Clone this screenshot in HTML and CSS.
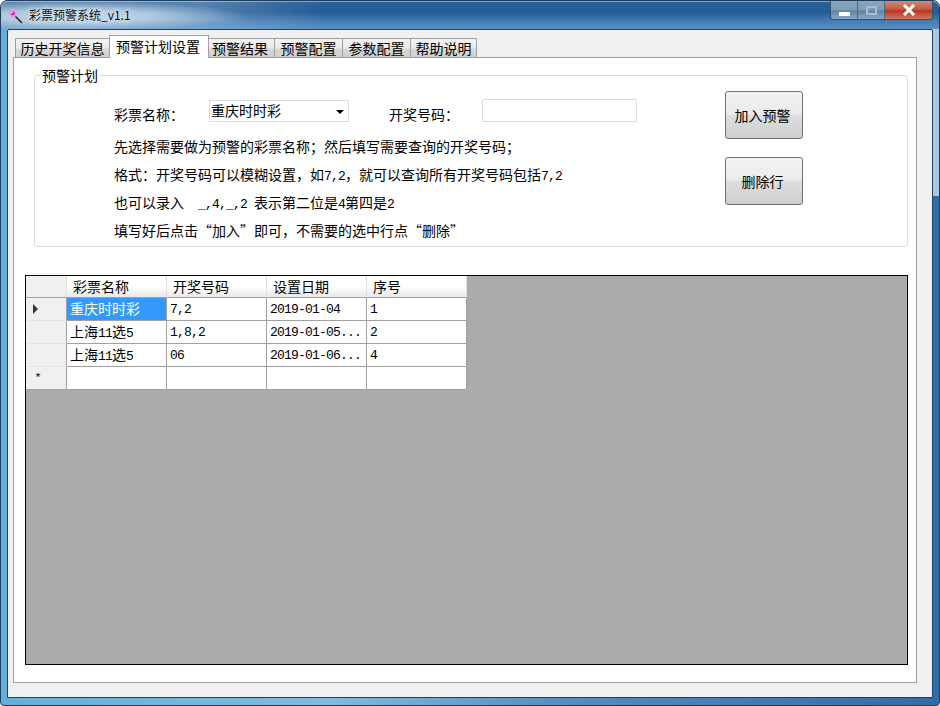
FILE: index.html
```html
<!DOCTYPE html>
<html lang="zh-CN">
<head>
  <meta charset="UTF-8">
  <title>彩票预警系统_v1.1</title>
  <link rel="stylesheet" href="styles.css">
</head>
<body>
  <div class="window">
    <div class="titlebar">
      <svg class="app-icon" width="16" height="16" viewBox="0 0 16 16">
        <path d="M7 7 L14 14" stroke="#222" stroke-width="1.6"/>
        <circle cx="5" cy="4.6" r="3.8" fill="#eb9be8"/>
        <circle cx="5" cy="4.6" r="2" fill="#c828c0"/>
        <circle cx="4.2" cy="3.8" r="0.8" fill="#fbe6fb"/>
      </svg>
      <span class="title">彩票预警系统_v1.1</span>
      <div class="controls">
        <div class="ctl ctl-min"><span class="min-glyph"></span></div>
        <div class="ctl ctl-max"><span class="max-glyph"></span></div>
        <div class="ctl ctl-close">
          <svg width="14" height="12" viewBox="0 0 14 12">
            <path d="M2 1 L12 11 M12 1 L2 11" stroke="#fff" stroke-width="3"/>
          </svg>
        </div>
      </div>
    </div>

    <div class="client">
      <div class="tabs">
        <div class="tab">历史开奖信息</div>
        <div class="tab active">预警计划设置</div>
        <div class="tab">预警结果</div>
        <div class="tab">预警配置</div>
        <div class="tab">参数配置</div>
        <div class="tab">帮助说明</div>
      </div>

      <div class="page">
        <div class="group">
          <div class="legend">预警计划</div>
          <div class="form">
            <div class="form-row">
              <label class="lbl lbl-name">彩票名称：</label>
              <div class="combo">重庆时时彩<span class="combo-arrow"></span></div>
              <label class="lbl lbl-code">开奖号码：</label>
              <input class="textbox" type="text">
            </div>
            <div class="note">先选择需要做为预警的彩票名称；然后填写需要查询的开奖号码；</div>
            <div class="note">格式：开奖号码可以模糊设置，如<span class="num">7,2</span>，就可以查询所有开奖号码包括<span class="num">7,2</span></div>
            <div class="note">也可以录入<span class="num">  _,4,_,2 </span>表示第二位是<span class="num">4</span>第四是<span class="num">2</span></div>
            <div class="note">填写好后点击“加入”即可，不需要的选中行点“删除”</div>
          </div>
          <div class="actions">
            <button class="btn">加入预警</button>
            <button class="btn">删除行</button>
          </div>
        </div>

        <div class="datagrid">
          <table class="rows">
            <colgroup>
              <col class="col-head">
              <col class="col-data">
              <col class="col-data">
              <col class="col-data">
              <col class="col-data">
            </colgroup>
            <thead>
              <tr>
                <th></th>
                <th>彩票名称</th>
                <th>开奖号码</th>
                <th>设置日期</th>
                <th>序号</th>
              </tr>
            </thead>
            <tbody>
              <tr>
                <th><span class="arrow"></span></th>
                <td class="selected">重庆时时彩</td>
                <td class="num">7,2</td>
                <td class="num">2019-01-04</td>
                <td class="num">1</td>
              </tr>
              <tr>
                <th></th>
                <td>上海<span class="num">11</span>选<span class="num">5</span></td>
                <td class="num">1,8,2</td>
                <td class="num">2019-01-05...</td>
                <td class="num">2</td>
              </tr>
              <tr>
                <th></th>
                <td>上海<span class="num">11</span>选<span class="num">5</span></td>
                <td class="num">06</td>
                <td class="num">2019-01-06...</td>
                <td class="num">4</td>
              </tr>
              <tr>
                <th class="star">*</th>
                <td></td>
                <td></td>
                <td></td>
                <td></td>
              </tr>
            </tbody>
          </table>
        </div>
      </div>
    </div>
  </div>
</body>
</html>
```

FILE: styles.css
```css
* {
  box-sizing: border-box;
}

body {
  margin: 0;
  background-color: #fff;
  color: #000;
  font-family: "Noto Sans CJK SC", "Liberation Sans", sans-serif;
  font-size: 14px;
}

.num {
  font-family: "Liberation Mono", monospace;
  font-size: 13px;
  letter-spacing: -0.8px;
  line-height: 1;
  white-space: pre;
}

/* window frame */
.window {
  width: 940px;
  height: 706px;
  display: flex;
  flex-direction: column;
  padding: 0 6px 7px;
  border: 1px solid #1d3d5c;
  border-radius: 7px 7px 4px 4px;
  background:
    linear-gradient(#a6c8e0, #a6c8e0) right top / 7px 195px no-repeat,
    linear-gradient(to right, #62b0dc 0, #7dbde0 35%, #4f8fc4 60%, #2e6dab 100%);
}

.titlebar {
  flex: none;
  height: 28px;
  margin: 0 -6px;
  padding-left: 7px;
  display: flex;
  align-items: flex-start;
  border-radius: 6px 6px 0 0;
  box-shadow: inset 0 1px rgba(255, 255, 255, 0.4);
  background:
    radial-gradient(ellipse 170px 15px at 75px 15px, rgba(205, 222, 236, 0.9) 0, rgba(205, 222, 236, 0.75) 45%, rgba(205, 222, 236, 0) 100%),
    linear-gradient(to right, rgba(190, 212, 230, 0.3) 0, rgba(190, 212, 230, 0.3) 200px, rgba(190, 212, 230, 0) 320px),
    linear-gradient(#2b6198 0, #245b95 40%, #437cb3 70%, #5a90c0 100%);
}

.app-icon {
  margin-top: 8px;
}

.title {
  margin-left: 5px;
  margin-top: 6px;
  font-size: 12px;
  line-height: 16px;
  color: #111;
  text-shadow: 0 0 4px #dfeaf3, 0 0 6px #dfeaf3;
}

.controls {
  margin-left: auto;
  margin-right: 6px;
  display: flex;
  height: 19px;
  border: 1px solid #34516e;
  border-top: none;
  border-radius: 0 0 4px 4px;
  overflow: hidden;
}

.ctl {
  display: flex;
  align-items: center;
  justify-content: center;
  border-right: 1px solid #4a6a88;
  background: linear-gradient(#8aa5bd 0, #7e9cb6 50%, #5f83a3 55%, #8aa7c0 100%);
}

.ctl-min {
  width: 27px;
}

.ctl-max {
  width: 27px;
}

.ctl-close {
  width: 47px;
  border-right: none;
  background: linear-gradient(#d08a7a 0, #c45a44 45%, #b8361f 55%, #d07a60 100%);
}

.min-glyph {
  width: 11px;
  height: 4px;
  margin-top: 7px;
  background-color: #fff;
}

.max-glyph {
  width: 11px;
  height: 9px;
  border: 2px solid #a9bdce;
}

/* client area */
.client {
  flex: 1;
  display: flex;
  flex-direction: column;
  padding: 5px 15px 14px 5px;
  border: 1px solid #23405c;
  border-radius: 2px 2px 0 0;
  background-color: #f0f0f0;
}

.tabs {
  flex: none;
  display: grid;
  grid-template-columns: 94px 99px 66px 68px 68px 66px;
  align-items: end;
  height: 23px;
  margin-bottom: -1px;
  padding-left: 2px;
  position: relative;
  z-index: 1;
}

.tab {
  height: 19px;
  margin-bottom: 1px;
  border: 1px solid #a0a0a0;
  border-bottom: none;
  margin-right: -1px;
  background: linear-gradient(#f3f3f3 0, #ebebeb 50%, #d8d8d8 55%, #cfcfcf 100%);
  text-align: center;
  line-height: 19px;
  white-space: nowrap;
}

.tab.active {
  height: 23px;
  margin-bottom: 0;
  padding-right: 2px;
  background: #fff;
  line-height: 21px;
}

.tab:nth-child(3) {
  padding-right: 3px;
}

.page {
  flex: 1;
  display: flex;
  flex-direction: column;
  padding: 17px 8px 17px 11px;
  border: 1px solid #a0a0a0;
  background-color: #fff;
}

/* group box */
.group {
  flex: none;
  height: 172px;
  margin-left: 9px;
  padding: 15px 104px 0 79px;
  display: flex;
  position: relative;
  border: 1px solid #dcdcdc;
  border-radius: 3px;
}

.legend {
  position: absolute;
  top: -9px;
  left: 6px;
  padding: 0 1px;
  background-color: #fff;
  line-height: 16px;
}

.form {
  flex: 1;
}

.form-row {
  display: flex;
  align-items: flex-start;
  height: 24px;
  margin-top: 8px;
  margin-bottom: 9px;
}

.lbl {
  margin-top: 7px;
  line-height: 16px;
}

.lbl-name {
  width: 95px;
}

.lbl-code {
  width: 93px;
  margin-left: 40px;
}

.combo {
  width: 140px;
  height: 22px;
  margin-top: 1px;
  padding-left: 1px;
  position: relative;
  border: 1px solid #dcdcdc;
  background-color: #fff;
  line-height: 19px;
}

.combo-arrow {
  position: absolute;
  top: 9px;
  right: 4px;
  border-left: 4px solid transparent;
  border-right: 4px solid transparent;
  border-top: 4px solid #000;
}

.textbox {
  width: 155px;
  height: 23px;
  padding: 0 2px;
  border: 1px solid #dcdcdc;
  border-radius: 2px;
  background-color: #fff;
}

.note {
  height: 28px;
  line-height: 28px;
  white-space: nowrap;
}

.actions {
  flex: none;
  display: flex;
  flex-direction: column;
  gap: 18px;
}

.btn {
  width: 78px;
  height: 48px;
  padding: 0 3px 0 0;
  border: 1px solid #707070;
  border-radius: 3px;
  background: linear-gradient(#f2f2f2 0, #ebebeb 48%, #dddddd 52%, #cfcfcf 100%);
  color: #000;
  font-family: inherit;
  font-size: 14px;
}

/* data grid */
.datagrid {
  flex: 1;
  margin-top: 28px;
  border: 1px solid #000;
  background-color: #ababab;
}

.rows {
  width: 441px;
  table-layout: fixed;
  border-collapse: separate;
  border-spacing: 0;
}

.col-head {
  width: 41px;
}

.col-data {
  width: 100px;
}

.rows th,
.rows td {
  padding: 0 3px;
  border-right: 1px solid #a0a0a0;
  border-bottom: 1px solid #a0a0a0;
  font-weight: normal;
  text-align: left;
  overflow: hidden;
}

.rows thead th {
  height: 22px;
  padding: 0 6px 2px;
  border-right: 1px solid #e0e0e0;
  background: linear-gradient(#fff 0, #fff 50%, #e9e9e9 100%);
  line-height: 18px;
}

.rows thead th:first-child {
  background: #f0f0f0;
}

.rows tbody th {
  background-color: #f0f0f0;
  border-bottom-color: #e4e4e4;
  border-right-color: #a0a0a0;
}

.rows tbody tr:last-child th {
  border-bottom-color: #a0a0a0;
}

.rows td {
  height: 23px;
  padding-bottom: 2px;
  background-color: #fff;
  white-space: nowrap;
  line-height: 18px;
}

.rows td.num {
  padding-top: 2px;
  padding-bottom: 0;
}

.rows td.selected {
  background-color: #3399ff;
  color: #fff;
}

.arrow {
  display: block;
  margin-left: 4px;
  width: 0;
  border-top: 5px solid transparent;
  border-bottom: 5px solid transparent;
  border-left: 5px solid #333;
}

.rows .star {
  padding-left: 9px;
  font-size: 13px;
  line-height: 16px;
  color: #333;
}
```
